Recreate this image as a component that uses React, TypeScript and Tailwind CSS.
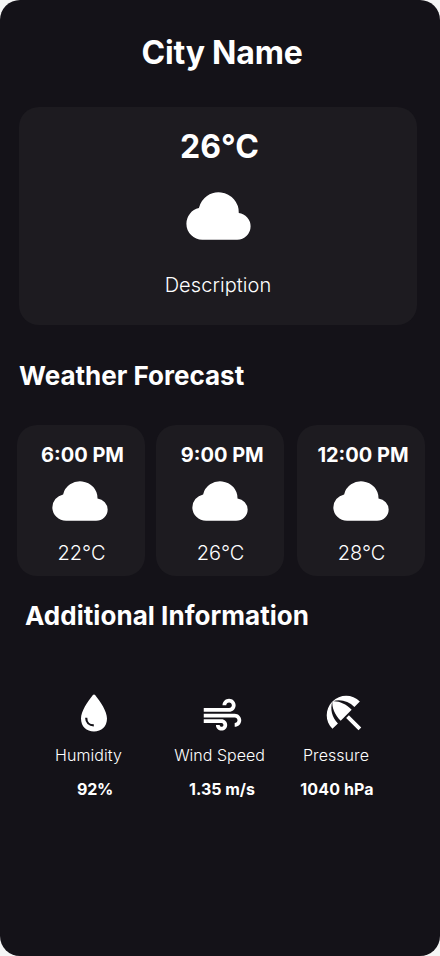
import { MdAir, MdBeachAccess } from "react-icons/md";

function Cloud({ className }: { className: string }) {
  return (
    <svg viewBox="-0.4 0 65 48" preserveAspectRatio="none" fill="currentColor" className={`overflow-visible ${className}`}>
      <path d="M16 47.7A16 16 0 0 1 0 31.7A16 16 0 0 1 12.5 16.1A20.2 20.2 0 0 1 52.4 21A13.4 13.4 0 0 1 64.2 34.3A13.4 13.4 0 0 1 50.8 47.7Z" />
    </svg>
  );
}

function Drop() {
  return (
    <svg viewBox="0 0 26 38" className="h-[38px] w-[26px]">
      <path
        d="M13 .4C13.500 .4 13.800 .7 14.100 1.100C19.500 7.800 26 17.500 26 24.500C26 32.500 20.500 37.500 13 37.500S0 32.500 0 24.500C0 17.500 6.500 7.800 11.900 1.100C12.200 .7 12.500 .4 13 .4Z"
        fill="white"
      />
      <path d="M5.200 23.700C5.200 28.300 8.200 31.400 12.800 31.400" fill="none" stroke="#141218" strokeWidth="2.200" />
    </svg>
  );
}

const forecast = [
  { time: "6:00 PM", temp: "22°C", card: "", timeShift: "pl-[3px]", iconShift: "pr-[2px]" },
  { time: "9:00 PM", temp: "26°C", card: "ml-[11px]", timeShift: "pl-[4.500px]", iconShift: "" },
  { time: "12:00 PM", temp: "28°C", card: "ml-[13px]", timeShift: "pl-[4px]", iconShift: "" },
];

export default function App() {
  return (
    <div className="h-[956px] w-[440px] bg-[#f5f5f5]">
      <main className="flex h-full flex-col overflow-hidden rounded-[20px] bg-[#141218] font-['Inter',sans-serif] whitespace-nowrap text-white">
        <h1 className="mt-[33px] pl-[4px] text-center text-[32px] leading-10 font-bold tracking-[-0.2px]">City Name</h1>

        <section className="mt-[34px] ml-[19px] flex h-[218px] w-[398px] flex-col items-center rounded-[20px] bg-[#1d1b20]">
          <p className="mt-5 pl-[3px] text-[32px] leading-10 font-bold">26°C</p>
          <Cloud className="mt-[25px] h-12 w-[65px]" />
          <p className="mt-[33px] text-xl leading-6 font-light tracking-[0.08px]">Description</p>
        </section>

        <h2 className="mt-[35px] ml-[19px] text-[26px] leading-8 font-bold">Weather Forecast</h2>

        <section className="mt-[33px] ml-[17px] flex">
          {forecast.map((f) => (
            <div key={f.time} className={`flex h-[151px] w-32 shrink-0 flex-col items-center rounded-[20px] bg-[#1d1b20] ${f.card}`}>
              <p className={`mt-[18px] text-xl leading-6 font-bold ${f.timeShift}`}>{f.time}</p>
              <div className={`mt-[14px] ${f.iconShift}`}>
                <Cloud className="h-10 w-14" />
              </div>
              <p className="mt-5 pl-px text-xl leading-6 font-light">{f.temp}</p>
            </div>
          ))}
        </section>

        <h2 className="mt-6 ml-[25px] text-[26px] leading-8 font-bold tracking-[0.04px]">Additional Information</h2>

        <section className="mt-[58px] ml-[38px] flex">
          <div className="flex w-[101px] flex-col items-center">
            <div className="flex h-[46px] items-start pt-[4px] pl-[11px]"><Drop /></div>
            <p className="mt-[9px] text-base leading-5 font-light tracking-[0.06px]">Humidity</p>
            <p className="mt-[14px] pl-[13px] text-base leading-5 font-bold tracking-[-0.3px]">92%</p>
          </div>
          <div className="ml-[30px] flex w-[101px] flex-col items-center">
            <div className="flex h-[46px] items-start pt-[3px] pl-[5px]"><MdAir size={45} /></div>
            <p className="mt-[9px] text-base leading-5 font-light">Wind Speed</p>
            <p className="mt-[14px] pl-[5px] text-base leading-5 font-bold">1.35 m/s</p>
          </div>
          <div className="ml-[16px] flex w-[100px] flex-col items-center">
            <div className="flex h-[46px] items-center pl-[16px]"><MdBeachAccess size={46} /></div>
            <p className="mt-[9px] text-base leading-5 font-light tracking-[0.06px]">Pressure</p>
            <p className="mt-[14px] pl-[2px] text-base leading-5 font-bold tracking-[0.1px]">1040 hPa</p>
          </div>
        </section>
      </main>
    </div>
  );
}
